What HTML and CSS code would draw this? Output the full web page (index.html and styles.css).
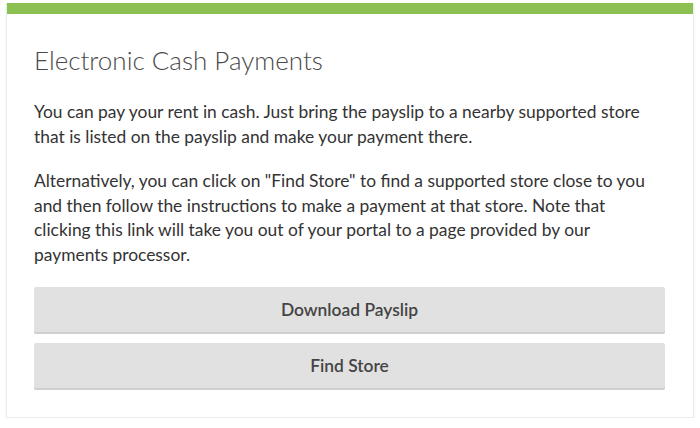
FILE: index.html
```html
<!DOCTYPE html>
<html lang="en">
  <head>
    <meta charset="UTF-8">
    <meta name="viewport" content="width=device-width, initial-scale=1.0">
    <title>Electronic Cash Payments</title>
    <link rel="stylesheet" href="styles.css">
  </head>
  <body>
    <!-- Cash payment card -->
    <div class="card">
      <div class="card-bar"></div>
      <div class="card-body">
        <h2 class="card-title">Electronic Cash Payments</h2>
        <p>You can pay your rent in cash. Just bring the payslip to a nearby supported store that is listed on the payslip and make your payment there.</p>
        <p>Alternatively, you can click on "Find Store" to find a supported store close to you and then follow the instructions to make a payment at that store. Note that clicking this link will take you out of your portal to a page provided by our payments processor.</p>
        <div class="card-actions">
          <button class="btn" type="button">Download Payslip</button>
          <button class="btn" type="button">Find Store</button>
        </div>
      </div>
    </div>
  </body>
</html>
```
FILE: styles.css
```css
body {
  background-color: #fff;
  color: #333;
  font-family: Lato, "Open Sans", sans-serif;
  margin: 0;
  padding: 3px 6px 0 6px;
}

.card {
  background: #fff;
  border: 1px solid #e6ecf0;
  border-top: none;
  box-shadow: 0 1px 3px rgba(0, 0, 0, 0.06);
}

.card-bar {
  height: 11px;
  background: #8cc152;
}

.card-body {
  padding: 31px 28px 29px 27px;
}

.card-title {
  margin: 0 0 25px 0;
  font-size: 26px;
  font-weight: 300;
  color: #4a4a4a;
  line-height: 30px;
}

p {
  margin: 0 0 20px 0;
  font-size: 17.4px;
  line-height: 24.5px;
}

p:last-of-type {
  margin-bottom: 0;
}

.card-actions {
  display: flex;
  flex-direction: column;
  gap: 11px;
  margin-top: 20px;
}

.btn {
  height: 45px;
  width: 100%;
  background: #e1e1e1;
  border: none;
  border-radius: 2px;
  box-shadow: 0 2px 0 #cfcfcf;
  color: #444;
  font-family: Lato, "Open Sans", sans-serif;
  font-size: 17.4px;
  font-weight: 600;
  cursor: pointer;
}
```
